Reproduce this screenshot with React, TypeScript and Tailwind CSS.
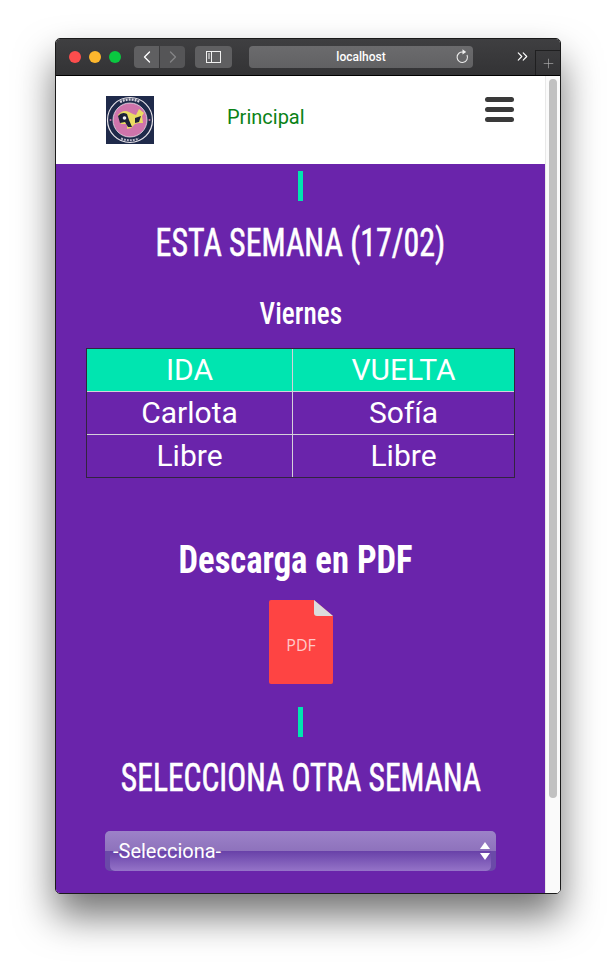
import { ChevronLeft, ChevronRight, Plus, ChevronsRight } from "lucide-react";

const condensed = "[font-family:'Liberation_Sans_Narrow','Roboto_Condensed','Liberation_Sans',sans-serif]";

const rows = [
  ["Carlota", "Sofía"],
  ["Libre", "Libre"],
];

const Logo = () => (
  <svg viewBox="0 0 48 48" className="w-12 h-12 block">
    <rect width="48" height="48" fill="#1f2a4a" />
    <circle cx="24" cy="24" r="22.5" fill="none" stroke="#e8e4ea" strokeWidth="1.2" />
    <circle cx="24" cy="24" r="17" fill="#cf74ab" stroke="#e8e4ea" strokeWidth="0.8" />
    <path d="M12 19 Q17 13 23 16 L27 18 L30 19 L33 13 L38 17 L36 20 L37 27 L33 27 L29 28 L25 32 L21 33 L21 28 L15 28 Z" fill="#eadc62" />
    <path d="M12 20 Q16 15 21 18 L23 24 L26 31 L22 31 L19 26 L14 27 Z" fill="#1d2238" />
    <path d="M29 22 L35 20 L33 26 L29 27 Z" fill="#1d2238" />
    <circle cx="18.5" cy="22" r="1.8" fill="#f4f2f4" />
    <path d="M14 6 Q24 1 34 6" fill="none" stroke="#d8d4de" strokeWidth="2.4" strokeDasharray="2 1" />
    <path d="M15 42.5 Q24 46 33 42.5" fill="none" stroke="#b8b4c4" strokeWidth="2" strokeDasharray="2 1" />
    <circle cx="4.5" cy="24" r="1" fill="#cf74ab" />
    <circle cx="43.5" cy="24" r="1" fill="#cf74ab" />
  </svg>
);

const PdfIcon = () => (
  <svg viewBox="0 0 64 84" className="w-16 h-[84px] block">
    <path d="M2 0 H45 L64 16 V82 Q64 84 62 84 H2 Q0 84 0 82 V2 Q0 0 2 0 Z" fill="#fe4443" />
    <path d="M45 0 L64 16 H48 Q45 16 45 13 Z" fill="#dcdcdc" />
    <text x="32" y="51" textAnchor="middle" fontSize="16" fill="#ffc8c8" fontFamily="Open Sans, sans-serif">PDF</text>
  </svg>
);

const ReloadIcon = () => (
  <svg width="14" height="15" viewBox="0 0 14 15" fill="none" className="absolute right-[4px] top-[3px]">
    <path d="M8.2 3.1 A5.2 5.2 0 1 0 12 6" stroke="#e8e8e8" strokeWidth="1.1" />
    <path d="M7.5 0.3 L11.2 3 L7.5 5.6 Z" fill="#f0f0f0" />
  </svg>
);

const Divider = () => <div className="w-[5px] h-[30px] bg-[#00e5b0]" />;

export default function App() {
  return (
    <div className="min-h-[967px] bg-white pl-[55px] pt-[38px] overflow-hidden">
      <div className="w-[506px] h-[856px] rounded-[5px] overflow-hidden border border-[#1a1a1a] shadow-[0_22px_38px_rgba(0,0,0,0.55)] flex flex-col font-['Roboto',sans-serif]">
        {/* barra del navegador */}
        <div className="h-[37px] shrink-0 flex items-center bg-gradient-to-b from-[#3f3f41] to-[#333335] border-b border-black pl-[13px] relative">
          <div className="flex gap-2">
            <span className="w-3 h-3 rounded-full bg-[#fc4d4d]" />
            <span className="w-3 h-3 rounded-full bg-[#fdb72d]" />
            <span className="w-3 h-3 rounded-full bg-[#0ac840]" />
          </div>
          <div className="flex gap-px ml-[13px]">
            <div className="w-[25px] h-[22px] rounded-l bg-[#5f5f61] flex items-center justify-center">
              <ChevronLeft size={20} strokeWidth={1.6} className="text-white" />
            </div>
            <div className="w-[25px] h-[22px] rounded-r bg-[#555557] flex items-center justify-center">
              <ChevronRight size={20} strokeWidth={1.6} className="text-[#858587]" />
            </div>
          </div>
          <div className="w-[37px] h-[22px] rounded bg-[#5f5f61] ml-[10px] flex items-center justify-center">
            <svg width="15" height="12" viewBox="0 0 15 12" fill="none" stroke="#f0f0f0" strokeWidth="1">
              <rect x="0.5" y="0.5" width="14" height="11" />
              <path d="M5.5 0.5 V11.5 M2 3 H4 M2 5 H4 M2 7 H4" />
            </svg>
          </div>
          <div className="w-[224px] h-[22px] rounded bg-gradient-to-b from-[#6b6b6d] to-[#616163] ml-[17px] flex items-center justify-center text-white text-xs font-medium relative">
            localhost
            <ReloadIcon />
          </div>
          <ChevronsRight size={17} strokeWidth={1.6} className="text-white ml-[41px] -mt-px" />
          <div className="absolute right-0 bottom-0 w-[25px] h-[25px] border-l border-t border-[#1f1f20] flex items-center justify-center">
            <Plus size={15} strokeWidth={1} className="text-[#b5b5b5]" />
          </div>
        </div>

        <div className="flex-1 flex min-h-0">
          <div className="w-[489px] bg-[#6a24ab] flex flex-col items-center overflow-hidden">
            {/* cabecera */}
            <div className="w-full h-[88px] shrink-0 bg-white flex items-center pl-[50px] relative">
              <Logo />
              <a className="ml-[73px] -mt-[6px] text-[#0a8216] text-xl">Principal</a>
              <div className="absolute left-[429px] top-[21px] flex flex-col gap-[5px]">
                <span className="w-[29px] h-[5px] rounded-sm bg-[#3a3a3a]" />
                <span className="w-[29px] h-[5px] rounded-sm bg-[#3a3a3a]" />
                <span className="w-[29px] h-[5px] rounded-sm bg-[#3a3a3a]" />
              </div>
            </div>

            <div className="mt-[7px]"><Divider /></div>
            <h1 className={`mt-[18px] text-white text-[38px] leading-[48px] scale-x-[0.84] whitespace-nowrap [-webkit-text-stroke:0.6px_#fff] ${condensed}`}>ESTA SEMANA (17/02)</h1>
            <h2 className={`mt-[27px] text-white text-[31px] leading-[40px] font-medium scale-x-[0.88] ${condensed}`}>Viernes</h2>

            <table className="mt-[14px] w-[429px] border border-[#33243f] border-separate border-spacing-0 text-white text-[30px] text-center table-fixed">
              <tbody>
                <tr className="h-[43px] bg-[#00e5b0]">
                  <td className="border-r border-b border-[#d5d0da] w-[206px] p-0 leading-none">IDA</td>
                  <td className="border-b border-[#d5d0da] p-0 leading-none">VUELTA</td>
                </tr>
                {rows.map((row, i) => (
                  <tr key={i} className={i === 0 ? "h-[43px]" : "h-[42px]"}>
                    <td className={`border-r border-[#d5d0da] p-0 leading-none ${i === 0 ? "border-b" : ""}`}>{row[0]}</td>
                    <td className={`border-[#d5d0da] p-0 leading-none ${i === 0 ? "border-b" : ""}`}>{row[1]}</td>
                  </tr>
                ))}
              </tbody>
            </table>

            <h2 className={`mt-[58px] mr-[9px] text-white text-[38px] leading-[48px] font-bold scale-x-[0.91] whitespace-nowrap ${condensed}`}>Descarga en PDF</h2>
            <div className="mt-[16px]"><PdfIcon /></div>
            <div className="mt-[23px]"><Divider /></div>
            <h1 className={`mt-[17px] text-white text-[38px] leading-[48px] scale-x-[0.83] whitespace-nowrap [-webkit-text-stroke:0.6px_#fff] ${condensed}`}>SELECCIONA OTRA SEMANA</h1>

            {/* selector */}
            <div className="mt-[29px] w-[391px] h-10 shrink-0 rounded-[5px] relative overflow-hidden bg-[#6a4aa8] text-white text-xl flex items-center pl-2">
              <div className="absolute inset-x-0 top-0 h-5 bg-gradient-to-b from-[#9c82c8] to-[#8e72bc]" />
              <div className="absolute left-[5px] right-[5px] bottom-0 h-5 rounded-b-[5px] bg-gradient-to-b from-[#6840a8] to-[#9574c8]" />
              <span className="relative">-Selecciona-</span>
              <div className="absolute right-[6px] top-[11px] flex flex-col gap-1">
                <span className="w-0 h-0 border-x-[5px] border-x-transparent border-b-[7px] border-b-white" />
                <span className="w-0 h-0 border-x-[5px] border-x-transparent border-t-[7px] border-t-white" />
              </div>
            </div>
          </div>

          {/* barra de scroll */}
          <div className="w-[15px] bg-[#fafafa] border-l border-[#e8e8e8] pl-[3px] pt-[3px]">
            <div className="w-[8px] h-[719px] rounded bg-[#c1c1c1]" />
          </div>
        </div>
      </div>
    </div>
  );
}
